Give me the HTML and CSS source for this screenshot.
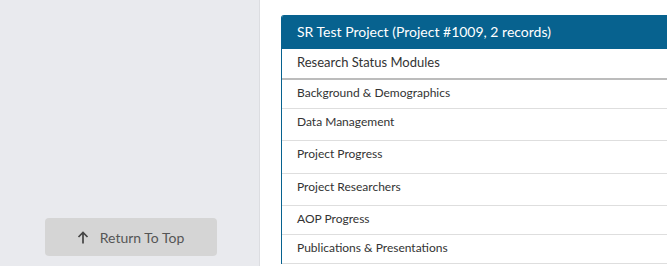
FILE: index.html
```html
<!DOCTYPE html>
<html lang="en">
<head>
  <meta charset="UTF-8" />
  <title>Project Records</title>
  <link rel="stylesheet" href="styles.css">
</head>
<body>
  <div class="layout">
    <aside class="sidebar">
      <button class="top-button" onclick="window.scrollTo(0, 0)">
        <svg class="arrow" width="12" height="13" viewBox="0 0 12 13">
          <path d="M6 12.5V1.5M1.5 6L6 1.5L10.5 6" fill="none" stroke="#444" stroke-width="1.7" />
        </svg>
        <span>Return To Top</span>
      </button>
    </aside>

    <main class="content">
      <div class="card">
        <div class="card-header">SR Test Project (Project #1009, 2 records)</div>
        <div class="row row-title">Research Status Modules</div>
        <div class="row row-short">Background &amp; Demographics</div>
        <div class="row row-mid">Data Management</div>
        <div class="row row-tall">Project Progress</div>
        <div class="row row-mid">Project Researchers</div>
        <div class="row row-short">AOP Progress</div>
        <div class="row row-short">Publications &amp; Presentations</div>
      </div>
    </main>
  </div>
</body>
</html>
```

FILE: styles.css
```css
body {
  margin: 0;
  font-family: Lato, "Open Sans", sans-serif;
  color: #333;
  background: #fff;
  overflow: hidden;
}
.layout {
  display: flex;
  height: 100vh;
}
.sidebar {
  width: 260px;
  flex-shrink: 0;
  background: #e9eaee;
  border-right: 1px solid #dcdde1;
  display: flex;
  flex-direction: column;
  justify-content: flex-end;
  align-items: center;
  padding-bottom: 10px;
  box-sizing: border-box;
}
.top-button {
  width: 172px;
  height: 38px;
  margin-left: 2px;
  background: #d5d5d5;
  border: none;
  border-radius: 4px;
  color: #555;
  font-family: inherit;
  font-size: 14px;
  display: flex;
  align-items: center;
  justify-content: center;
  gap: 11px;
  cursor: pointer;
}
.arrow {
  display: block;
}
.content {
  flex: 1;
  padding: 15px 0 0 21px;
  overflow: hidden;
}
.card {
  width: 480px;
  border-left: 1px solid #07628f;
  border-top-left-radius: 3px;
  overflow: hidden;
}
.card-header {
  background: #07628f;
  color: #fff;
  font-size: 14px;
  height: 34px;
  line-height: 34px;
  padding-left: 15px;
}
.row {
  font-size: 12px;
  padding: 5px 15px 0;
  line-height: 15px;
  border-bottom: 1px solid #dedede;
  box-sizing: border-box;
}
.row-title {
  font-size: 13px;
  height: 31px;
  padding-top: 6px;
  border-bottom: 2px solid #bcbcbc;
}
.row-short {
  height: 29px;
}
.row-mid {
  height: 32px;
}
.row-tall {
  height: 33px;
}
```
